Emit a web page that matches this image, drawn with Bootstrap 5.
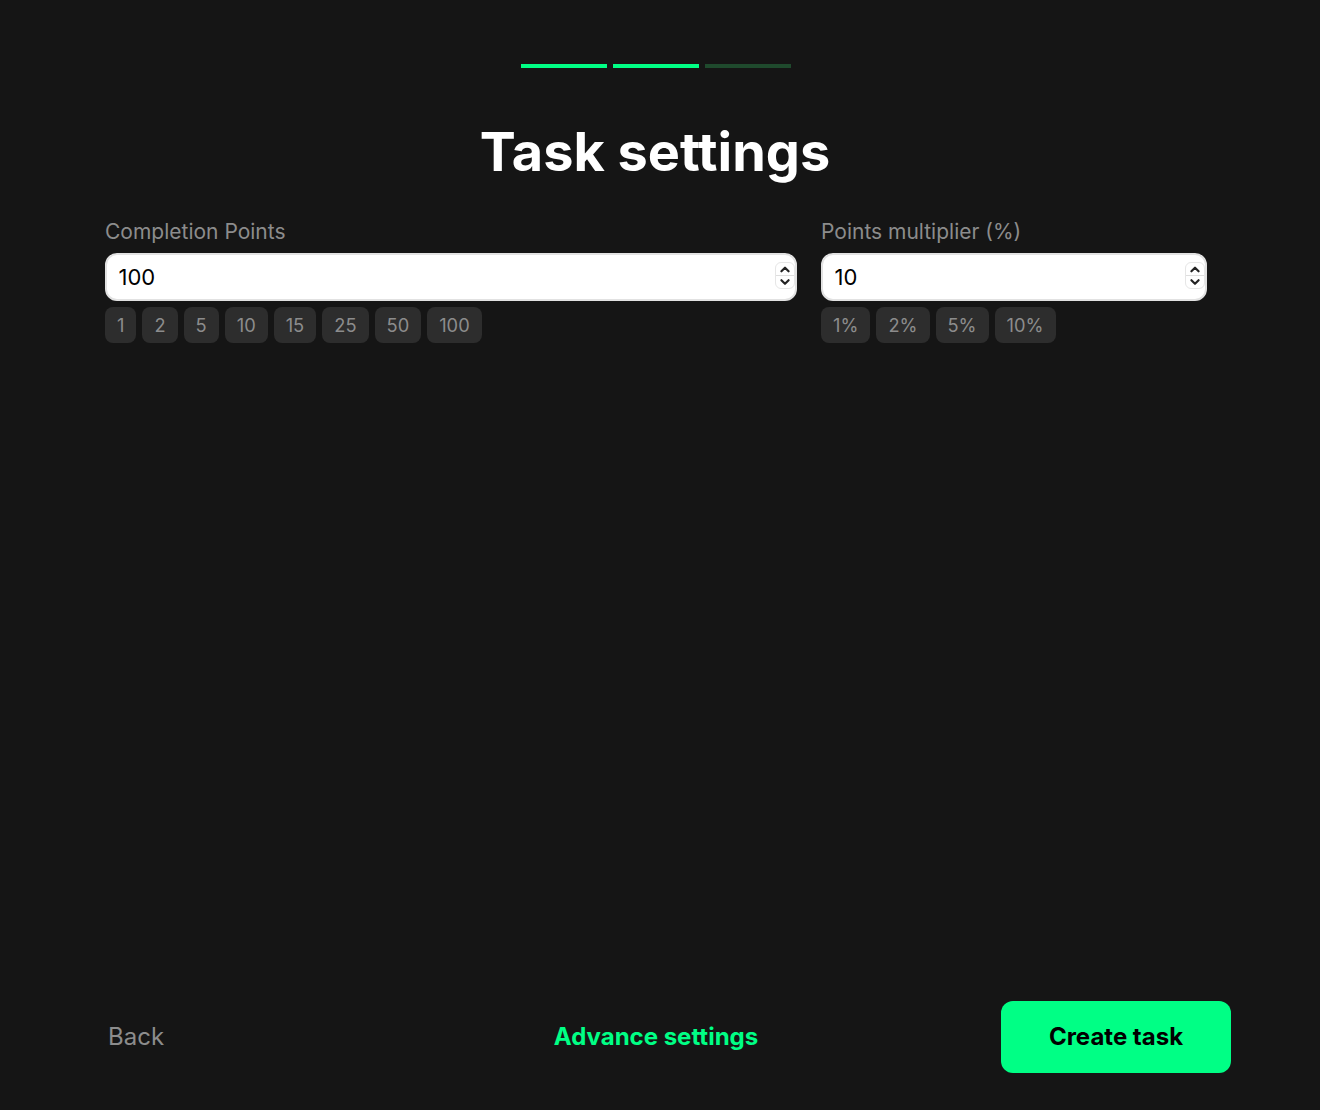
<!DOCTYPE html>
<html lang="en">
<head>
<meta charset="utf-8">
<title>Task settings</title>
<link rel="stylesheet" href="https://cdn.jsdelivr.net/npm/bootstrap@5.3.0/dist/css/bootstrap.min.css">
<style>
html,body{height:100%}
body{background:#151515;font-family:Inter,"Liberation Sans",sans-serif;overflow:hidden}
.page-shell{height:1110px;padding:64px 113px 37px 105px}
.steps-row{gap:6px}
.step-bar{width:86px;height:4px;background:#00ff85}
.step-bar.is-off{background:#1f4a2d}
.page-title{font-size:54px;line-height:63px;font-weight:700;color:#fff;margin:52px 0 0;padding-right:2px}
.fields-row{display:grid;grid-template-columns:692px 386px;column-gap:24px;margin-top:35px}
.field-label{display:block;font-size:21px;line-height:28px;color:#8c8c8c;margin:0 0 7px}
.field-wrap{position:relative}
.num-input{display:block;width:100%;height:48px;border:2px solid #e2e2e2;border-radius:12px;background:#fff;color:#000;font-size:22px;line-height:44px;padding:0 40px 1px 11.5px;outline:0;font-family:inherit}
.spin-box{position:absolute;top:9px;right:2px;width:20px;height:27px;border:1px solid #e6e6e6;border-radius:6px;background:#fff;display:flex;flex-direction:column}
.spin-box svg{display:block;flex:1 1 0;width:100%;min-height:0}
.spin-box svg+svg{border-top:1px solid #dedede}
.chips-row{margin-top:6px;gap:6px}
.chip-btn{height:36px;padding:0 12px;border:0;border-radius:8px;background:#2d2d2d;color:#8c8c8c;font-size:18.3px;line-height:36px}
.back-link{font-size:24px;color:#8c8c8c;padding:0 0 0 3px;text-decoration:none}
.adv-link{font-size:24px;font-weight:700;color:#00ff85;text-decoration:none}
.create-btn{width:230px;height:72px;border:0;border-radius:12px;background:#00ff85;color:#000;font-size:24px;font-weight:700;margin-right:-24px}
.footer-side{flex:1 1 0}
</style>
</head>
<body>
<div class="page-shell d-flex flex-column">
  <div class="steps-row d-flex justify-content-center">
    <div class="step-bar"></div>
    <div class="step-bar"></div>
    <div class="step-bar is-off"></div>
  </div>
  <h1 class="page-title text-center">Task settings</h1>
  <div class="fields-row">
    <div>
      <label class="field-label" for="pts">Completion Points</label>
      <div class="field-wrap">
        <input id="pts" class="num-input" type="text" value="100">
        <div class="spin-box" aria-hidden="true">
          <svg viewBox="0 0 20 13"><path d="M6 9 10 5l4 4" fill="none" stroke="#222" stroke-width="2.4" stroke-linecap="round" stroke-linejoin="round"/></svg>
          <svg viewBox="0 0 20 13"><path d="M6 4.5 10 8.5l4-4" fill="none" stroke="#222" stroke-width="2.4" stroke-linecap="round" stroke-linejoin="round"/></svg>
        </div>
      </div>
      <div class="chips-row d-flex">
        <button class="chip-btn">1</button><button class="chip-btn">2</button><button class="chip-btn">5</button><button class="chip-btn">10</button><button class="chip-btn">15</button><button class="chip-btn">25</button><button class="chip-btn">50</button><button class="chip-btn">100</button>
      </div>
    </div>
    <div>
      <label class="field-label" for="mul">Points multiplier (%)</label>
      <div class="field-wrap">
        <input id="mul" class="num-input" type="text" value="10">
        <div class="spin-box" aria-hidden="true">
          <svg viewBox="0 0 20 13"><path d="M6 9 10 5l4 4" fill="none" stroke="#222" stroke-width="2.4" stroke-linecap="round" stroke-linejoin="round"/></svg>
          <svg viewBox="0 0 20 13"><path d="M6 4.5 10 8.5l4-4" fill="none" stroke="#222" stroke-width="2.4" stroke-linecap="round" stroke-linejoin="round"/></svg>
        </div>
      </div>
      <div class="chips-row d-flex">
        <button class="chip-btn">1%</button><button class="chip-btn">2%</button><button class="chip-btn">5%</button><button class="chip-btn">10%</button>
      </div>
    </div>
  </div>
  <div class="mt-auto d-flex align-items-center">
    <div class="footer-side"><a class="back-link" href="#">Back</a></div>
    <a class="adv-link" href="#">Advance settings</a>
    <div class="footer-side d-flex justify-content-end"><button class="create-btn">Create task</button></div>
  </div>
</div>
</body>
</html>
